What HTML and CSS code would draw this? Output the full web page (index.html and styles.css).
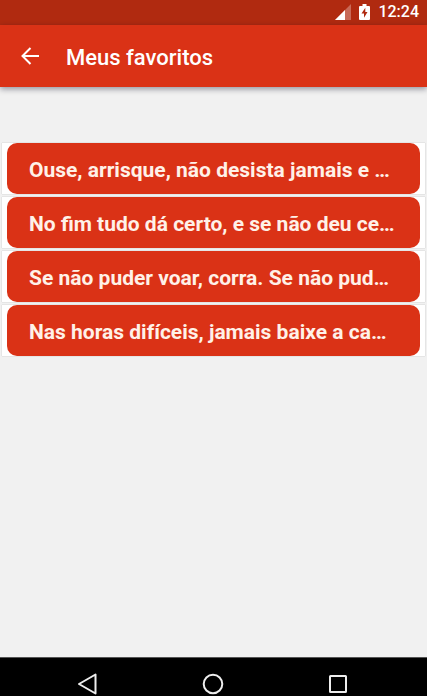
FILE: index.html
```html
<!DOCTYPE html>
<html lang="pt-BR">
<head>
<meta charset="utf-8">
<meta name="viewport" content="width=device-width, initial-scale=1">
<title>Meus favoritos</title>
<link rel="stylesheet" href="styles.css">
</head>
<body>
<div class="status">
  <svg class="signal" width="16" height="16" viewBox="0 0 16 16" aria-hidden="true"><path d="M0 16 16 0V16Z" fill="#fff" fill-opacity=".3"/><path d="M0 16 10 6V16Z" fill="#fff"/></svg>
  <svg class="battery" width="11" height="16" viewBox="0 0 11 16" aria-hidden="true"><path d="M1 2H3.500V0H7.500V2H10Q11 2 11 3V15Q11 16 10 16H1Q0 16 0 15V3Q0 2 1 2Z" fill="#fff"/><path d="M6.300 3.800 2.500 9.600H5V13.800L8.500 8H6.300Z" fill="#b02a10"/></svg>
  <span class="clock">12:24</span>
</div>
<header class="appbar">
  <button class="back" type="button" aria-label="Voltar">
    <svg width="18" height="18" viewBox="0 0 18 18" aria-hidden="true"><path d="M18 9H1.500M9.500 1 1.500 9 9.500 17" fill="none" stroke="#fff" stroke-width="2"/></svg>
  </button>
  <h1 class="title">Meus favoritos</h1>
</header>
<main class="content">
  <ul class="list">
    <li class="row"><button class="quote" type="button">Ouse, arrisque, não desista jamais e …</button></li>
    <li class="row"><button class="quote" type="button">No fim tudo dá certo, e se não deu ce…</button></li>
    <li class="row"><button class="quote" type="button">Se não puder voar, corra. Se não pud…</button></li>
    <li class="row"><button class="quote" type="button">Nas horas difíceis, jamais baixe a ca…</button></li>
  </ul>
</main>
<nav class="navbar">
  <button class="key" type="button" aria-label="Voltar"><svg width="24" height="24" viewBox="0 0 24 24" aria-hidden="true"><path d="M19.500 2.500V21.500L3 12Z" fill="none" stroke="#eee" stroke-width="2" stroke-linejoin="round"/></svg></button>
  <button class="key" type="button" aria-label="Início"><svg width="24" height="24" viewBox="0 0 24 24" aria-hidden="true"><circle cx="12" cy="12" r="9.300" fill="none" stroke="#eee" stroke-width="2"/></svg></button>
  <button class="key" type="button" aria-label="Recentes"><svg width="24" height="24" viewBox="0 0 24 24" aria-hidden="true"><rect x="4" y="4" width="16" height="16" rx=".5" fill="none" stroke="#eee" stroke-width="2"/></svg></button>
</nav>
</body>
</html>
```
FILE: styles.css
```css
* {
  box-sizing: border-box;
}

body {
  margin: 0;
  min-height: 100vh;
  display: flex;
  flex-direction: column;
  background: #f1f1f1;
  font-family: Roboto, "Liberation Sans", sans-serif;
}

button {
  border: 0;
  padding: 0;
  background: none;
  font-family: inherit;
}

svg {
  display: block;
}

.status {
  display: flex;
  align-items: center;
  justify-content: flex-end;
  height: 25px;
  padding: 0 8px 2px 0;
  background: #b02a10;
  color: #fff;
}

.battery {
  margin: 0 8px;
}

.clock {
  font-size: 16px;
  font-weight: 500;
  line-height: 24px;
}

.appbar {
  display: flex;
  align-items: center;
  height: 62px;
  padding: 0 21px;
  background: #da3216;
  box-shadow: 0 2px 6px rgba(0, 0, 30, 0.4);
}

.back {
  margin-right: 27px;
}

.title {
  margin: 4px 0 0;
  color: #fff;
  font-size: 22px;
  font-weight: 500;
  line-height: 28px;
}

.content {
  flex: 1;
  padding: 56px 2px 0;
}

.list {
  display: grid;
  gap: 3px;
  margin: 0;
  padding: 0;
  list-style: none;
}

.row {
  padding: 0 5px;
  background: #fff;
  box-shadow: 0 0 1px #aaa;
}

.quote {
  display: block;
  width: 100%;
  padding: 14px 22px 10px;
  overflow: hidden;
  border-radius: 10px;
  background: #da3216;
  color: #fff1e8;
  font-size: 21px;
  font-weight: 700;
  line-height: 27px;
  text-align: left;
  white-space: nowrap;
}

.navbar {
  display: flex;
  justify-content: center;
  gap: 101px;
  height: 39px;
  padding: 14px 2px 0 0;
  border-top: 1px solid #555;
  background: #000;
}
```
